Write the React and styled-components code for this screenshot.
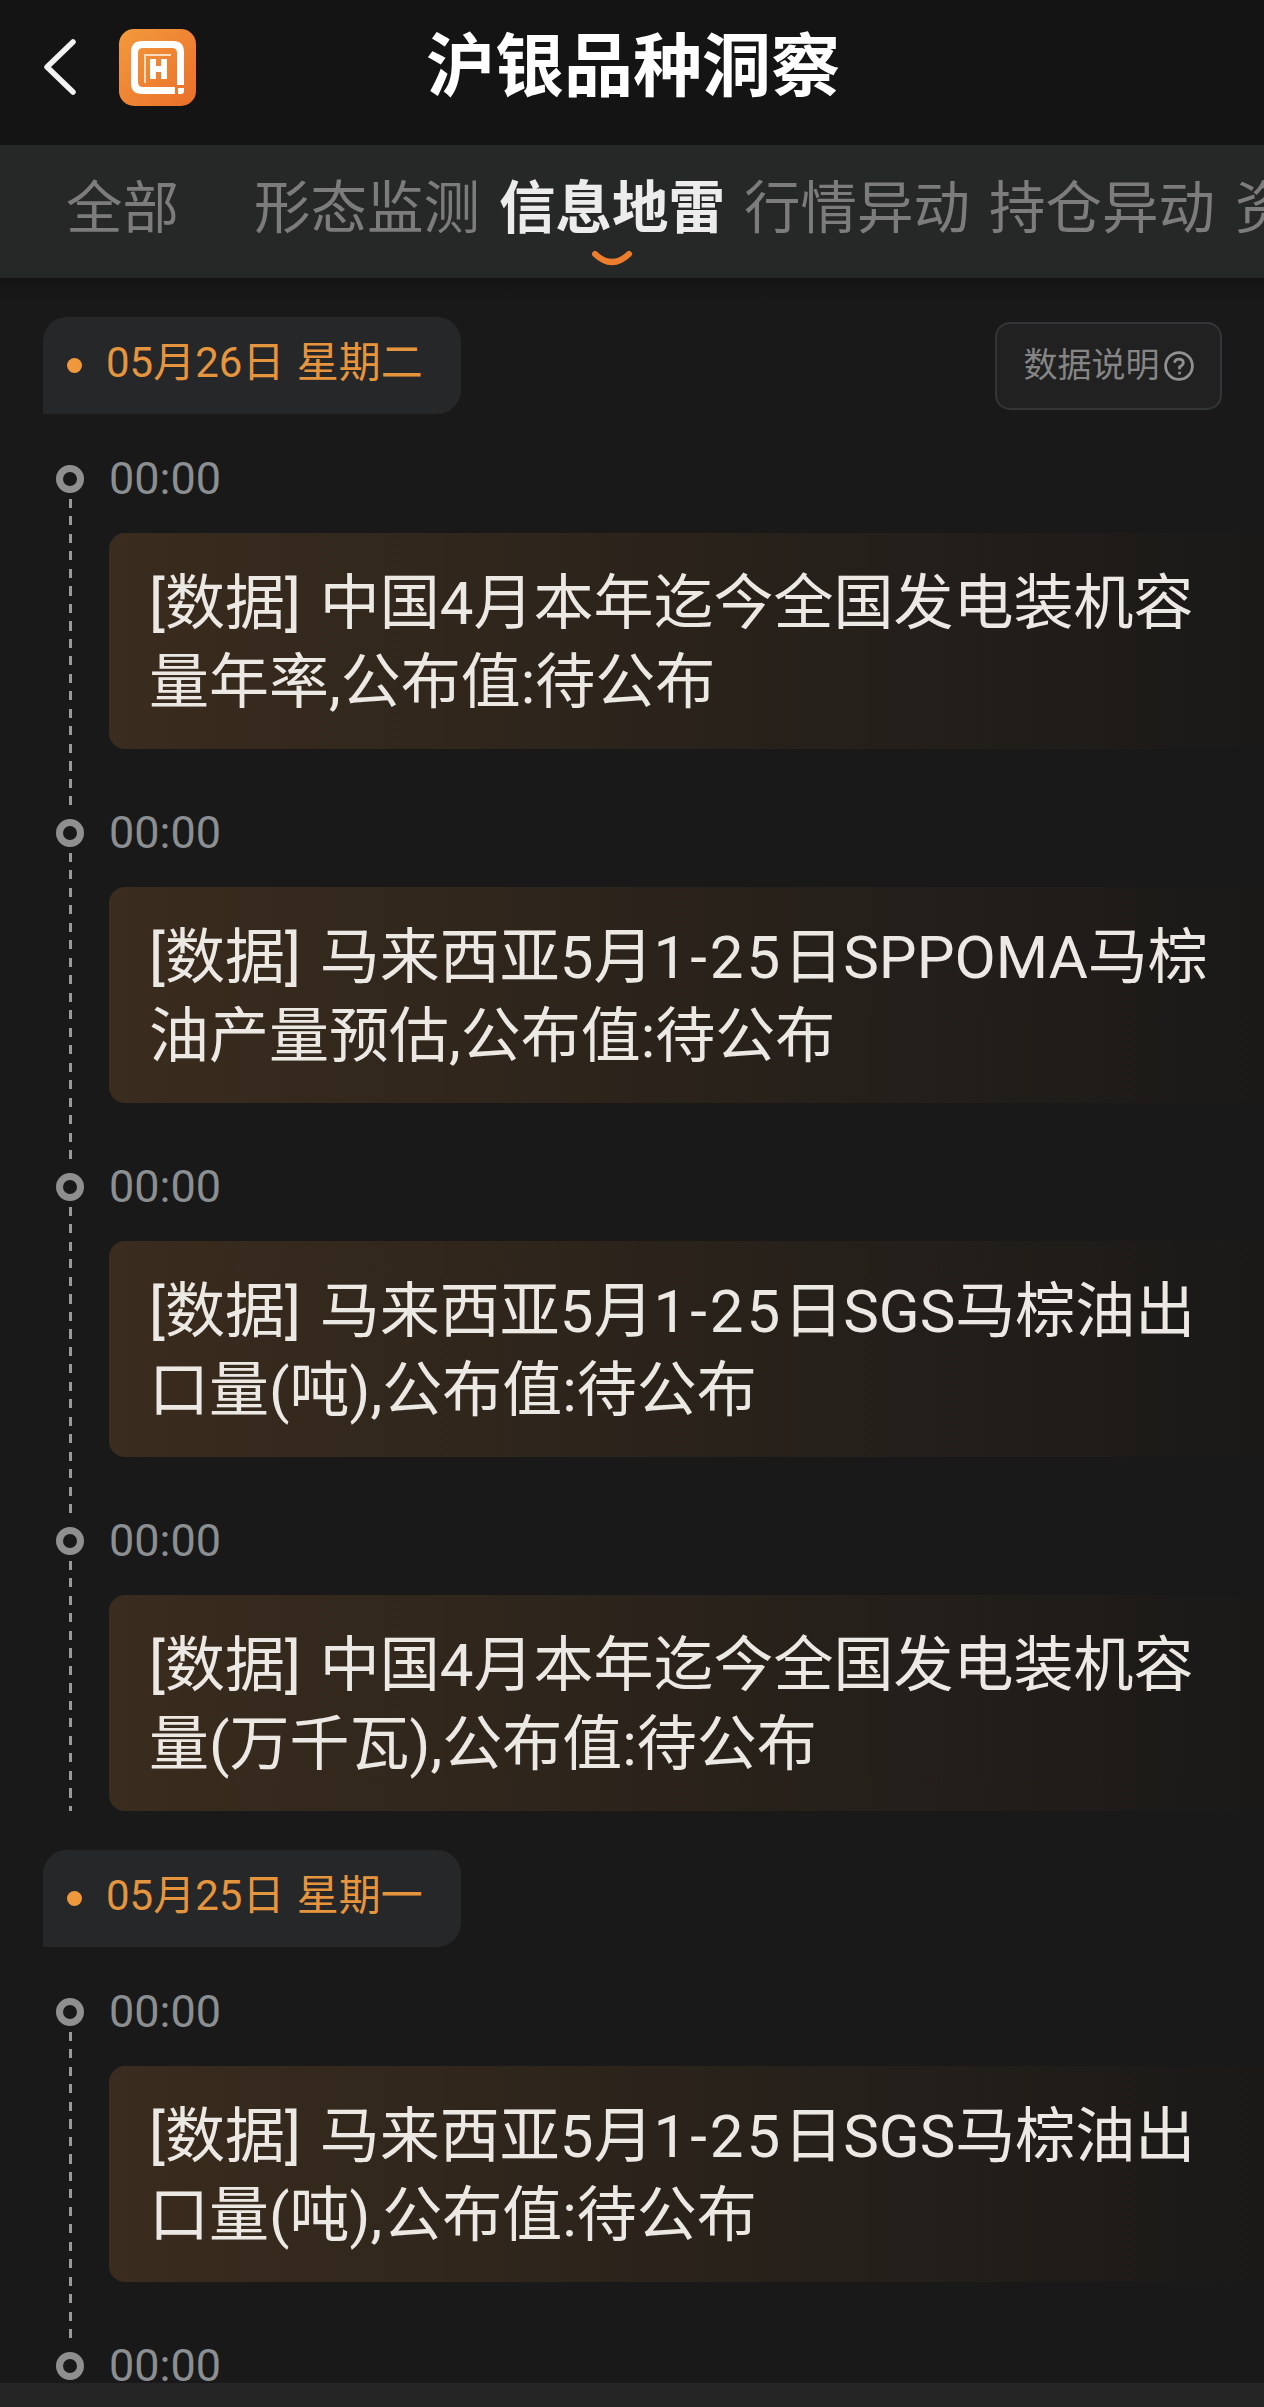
import styled, { createGlobalStyle } from 'styled-components';

const GlobalStyle = createGlobalStyle`
body {
    margin: 0;
    background: #191919;
    font-family: Roboto, "Noto Sans CJK SC", sans-serif;
}
`;

const tabs = [
    { label: '全部', width: 188 },
    { label: '形态监测', width: 245 },
    { label: '信息地雷', width: 245, active: true },
    { label: '行情异动', width: 245 },
    { label: '持仓异动', width: 246 },
    { label: '资金流向', width: 245 },
];

const groups = [
    {
        date: '05月26日 星期二',
        hasHelp: true,
        closed: true,
        items: [
            ['[数据] 中国4月本年迄今全国发电装机容', '量年率,公布值:待公布'],
            ['[数据] 马来西亚5月', '日SPPOMA马棕', '油产量预估,公布值:待公布'],
            ['[数据] 马来西亚5月', '日SGS马棕油出', '口量(吨),公布值:待公布'],
            ['[数据] 中国4月本年迄今全国发电装机容', '量(万千瓦),公布值:待公布'],
        ],
    },
    {
        date: '05月25日 星期一',
        items: [
            ['[数据] 马来西亚5月', '日SGS马棕油出', '口量(吨),公布值:待公布'],
        ],
    },
];

// items with three parts have the date range between the first two
const CardText = ({ parts }) => {
    if (parts.length === 3) {
        return (
            <>
                <CardLine>{parts[0]}<DateRange>1-25</DateRange>{parts[1]}</CardLine>
                <CardLine>{parts[2]}</CardLine>
            </>
        );
    }
    return (
        <>
            <CardLine>{parts[0]}</CardLine>
            <CardLine>{parts[1]}</CardLine>
        </>
    );
}

const App = () => {
    return (
        <Page>
            <GlobalStyle />
            <Header>
                <BackIcon viewBox="0 0 32 56">
                    <path d="M29 3 L3 28 L29 53" />
                </BackIcon>
                <LogoIcon viewBox="0 0 77 77">
                    <defs>
                        <linearGradient id="logoFill" x1="0" y1="0" x2="1" y2="1">
                            <stop offset="0" stopColor="#f39a3c" />
                            <stop offset="1" stopColor="#ea6f2a" />
                        </linearGradient>
                    </defs>
                    <rect width="77" height="77" rx="15" fill="url(#logoFill)" />
                    <path d="M12 23 Q12 12 23 12 H54 Q65 12 65 23 V56 H58 V24 Q58 19 53 19 H24 Q19 19 19 24 V53 Q19 58 24 58 H56 V65 H23 Q12 65 12 54 Z" fill="#fff" />
                    <path d="M26 54 V26 H52" fill="none" stroke="#fbdcc0" strokeWidth="2" />
                    <path d="M31 30 H37 V37 H42 V30 H48 V50 H42 V43 H37 V50 H31 Z" fill="#fff" />
                    <path d="M59 59 H65 V62 Q65 65 62 65 H59 Z" fill="#fff" />
                </LogoIcon>
                <Title>沪银品种洞察</Title>
            </Header>
            <TabBar>
                {tabs.map((tab) => (
                    <Tab key={tab.label} $width={tab.width} $active={tab.active}>
                        {tab.label}
                        {tab.active && (
                            <TabSmile viewBox="0 0 42 17">
                                <path d="M4 4 Q21 20 38 4" />
                            </TabSmile>
                        )}
                    </Tab>
                ))}
            </TabBar>
            <Content>
                {groups.map((group) => (
                    <Group key={group.date} $closed={group.closed}>
                        <DateRow>
                            <DatePill>
                                <DateDot />
                                {group.date}
                            </DatePill>
                            {group.hasHelp && (
                                <HelpButton>
                                    数据说明
                                    <HelpIcon viewBox="0 0 28 28">
                                        <circle cx="14" cy="14" r="12.5" />
                                        <path d="M10 11 Q10 7.5 14 7.5 Q18 7.5 18 11 Q18 13 14.5 15 V17" />
                                        <circle className="dot" cx="14.5" cy="20.5" r="1.4" />
                                    </HelpIcon>
                                </HelpButton>
                            )}
                        </DateRow>
                        {group.items.map((parts, index) => {
                            const closed = group.closed && index === group.items.length - 1;
                            return (
                                <Item key={index}>
                                    <Rail>
                                        <Ring />
                                        <DashLine $closed={closed} />
                                    </Rail>
                                    <ItemBody>
                                        <Time>00:00</Time>
                                        <Card $closed={closed}>
                                            <CardText parts={parts} />
                                        </Card>
                                    </ItemBody>
                                </Item>
                            );
                        })}
                    </Group>
                ))}
                <Item>
                    <Rail>
                        <Ring />
                    </Rail>
                    <ItemBody>
                        <Time>00:00</Time>
                    </ItemBody>
                </Item>
            </Content>
            <BottomBar />
        </Page>
    )
}

const Page = styled.div`
display: flex;
flex-direction: column;
width: 1264px;
height: 2407px;
overflow: hidden;
background: #191919;
`;

const Header = styled.header`
display: flex;
align-items: center;
flex: none;
height: 145px;
padding-left: 44px;
background: #141414;
`;

const BackIcon = styled.svg`
width: 32px;
height: 56px;
fill: none;
stroke: #f2f2f2;
stroke-width: 5.5;
stroke-linecap: round;
stroke-linejoin: round;
margin: -12px 43px 0 0;
`;

const LogoIcon = styled.svg`
width: 77px;
height: 77px;
margin-top: -11px;
margin-right: 230px;
`;

const Title = styled.h1`
margin: -9px 0 0;
color: #fff;
font-size: 69px;
font-weight: 700;
line-height: 80px;
`;

const TabBar = styled.nav`
display: flex;
flex: none;
height: 133px;
padding-left: 66px;
overflow: hidden;
background: #262727;
`;

const Tab = styled.div`
position: relative;
flex: none;
width: ${(props) => props.$width}px;
color: ${(props) => (props.$active ? '#ececec' : '#7c7c7c')};
font-size: 56.5px;
font-weight: ${(props) => (props.$active ? 700 : 400)};
line-height: 128px;
white-space: nowrap;
`;

const TabSmile = styled.svg`
position: absolute;
left: 92px;
top: 105px;
width: 42px;
height: 17px;
fill: none;
stroke: #ec7d2e;
stroke-width: 6;
stroke-linecap: round;
`;

const Content = styled.main`
flex: 1;
min-height: 0;
overflow: hidden;
padding-top: 39px;
background: linear-gradient(#141414, #191919 24px);
`;

const Group = styled.section`
margin-bottom: ${(props) => (props.$closed ? 39 : 0)}px;
`;

const DateRow = styled.div`
display: flex;
align-items: center;
justify-content: space-between;
padding: 0 42px 0 43px;
margin-bottom: 51px;
`;

const DatePill = styled.div`
display: flex;
align-items: center;
width: 418px;
height: 97px;
box-sizing: border-box;
padding: 0 0 14px 24px;
border-radius: 24px 24px 24px 0;
background: #262728;
color: #e6953f;
font-size: 42px;
word-spacing: 2px;
white-space: pre;
`;

const DateDot = styled.span`
width: 15px;
height: 15px;
margin: 14px 24px 0 0;
border-radius: 50%;
background: #f0983c;
`;

const HelpButton = styled.div`
display: flex;
align-items: center;
justify-content: center;
gap: 4px;
width: 227px;
height: 88px;
box-sizing: border-box;
padding-bottom: 6px;
border: 2px solid #343536;
border-radius: 15px;
background: #212121;
color: #858585;
font-size: 34px;
`;

const HelpIcon = styled.svg`
width: 30px;
height: 30px;
margin-top: 6px;
fill: none;
stroke: #919191;
stroke-width: 2.6;
.dot {
    fill: #919191;
    stroke: none;
}
`;

const Item = styled.div`
display: flex;
padding-left: 56px;
`;

const Rail = styled.div`
display: flex;
flex-direction: column;
align-items: center;
flex: none;
width: 28px;
margin-right: 25px;
`;

const Ring = styled.span`
flex: none;
width: 28px;
height: 28px;
box-sizing: border-box;
border: 7px solid #8f8f8f;
border-radius: 50%;
`;

const DashLine = styled.span`
flex: 1;
width: 3px;
margin: 6px 0 ${(props) => (props.$closed ? 0 : 12)}px;
background: repeating-linear-gradient(#9a9a9a 0 9px, transparent 9px 17.5px);
`;

const ItemBody = styled.div`
flex: 1;
min-width: 0;
`;

const Time = styled.div`
height: 54px;
margin-top: -13px;
color: #8c8f92;
font-size: 45px;
line-height: 54px;
`;

const Card = styled.div`
box-sizing: border-box;
height: 216px;
margin: 27px 0 ${(props) => (props.$closed ? 0 : 70)}px;
padding: 31px 0 0 40px;
border-radius: 16px 0 0 16px;
background: linear-gradient(90deg, #3a2c1e, #1a1918 100%);
`;

const CardLine = styled.div`
color: #ece8e3;
font-size: 60px;
line-height: 79px;
word-spacing: 4px;
white-space: nowrap;
`;

const DateRange = styled.span`
letter-spacing: 3px;
`;

const BottomBar = styled.div`
flex: none;
height: 24px;
background: #252525;
`;

export default App
